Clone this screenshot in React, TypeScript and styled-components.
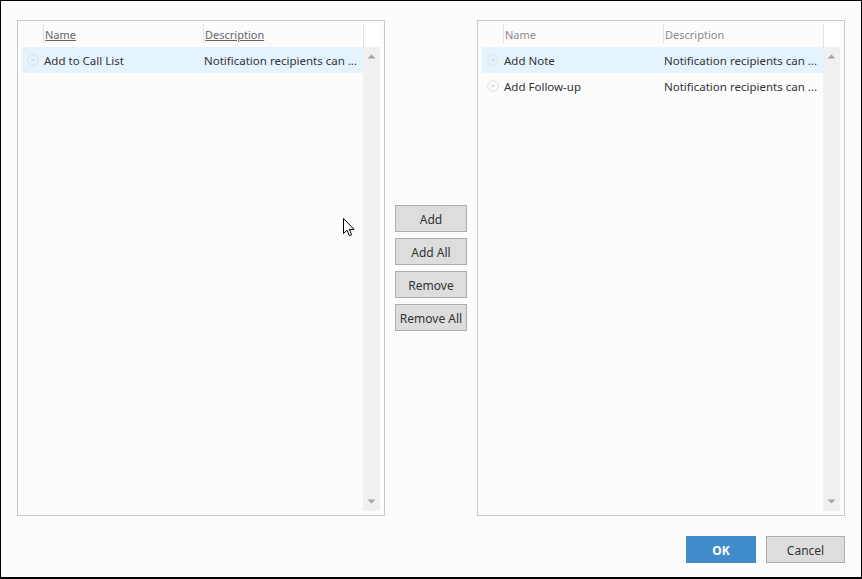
import styled, { createGlobalStyle } from 'styled-components';

const GlobalStyle = createGlobalStyle`
  body {
    margin: 0;
    background: #fff;
    font-family: 'Noto Sans', 'Open Sans', sans-serif;
  }
`;

const Dialog = styled.div`
  position: relative;
  box-sizing: border-box;
  width: 862px;
  height: 579px;
  border: 1px solid #000;
  border-bottom-width: 2px;
  background: #fcfcfc;
  padding: 19px 16px 0 16px;
  display: flex;
  flex-direction: column;
`;

const Lists = styled.div`
  display: flex;
  align-items: center;
`;

const Panel = styled.div`
  box-sizing: border-box;
  width: 368px;
  height: 496px;
  border: 1px solid #c9c9c9;
  background: #fcfcfc;
  padding: 3px 4px 4px 4px;
  display: flex;
  flex-direction: column;
`;

const Header = styled.div`
  display: grid;
  grid-template-columns: 21px 160px 160px 17px;
  height: 23px;
  flex: none;
`;

const HeaderCell = styled.div<{ $underlined?: boolean }>`
  display: flex;
  align-items: center;
  height: 18px;
  padding: 1px 0 0 1px;
  border-left: 1px solid #e2e2e2;
  font-size: 11px;
  color: ${p => (p.$underlined ? '#666' : '#8a8a8a')};
  text-decoration: ${p => (p.$underlined ? 'underline' : 'none')};
  white-space: nowrap;
  overflow: hidden;
`;

const HeaderBlank = styled.div``;

const ScrollHead = styled.div`
  height: 23px;
  border-left: 1px solid #e2e2e2;
  background: #fff;
`;

const Body = styled.div`
  flex: 1;
  display: flex;
  min-height: 0;
`;

const Rows = styled.div`
  flex: 1;
`;

const Row = styled.div<{ $selected?: boolean }>`
  display: grid;
  grid-template-columns: 21px 160px 160px;
  align-items: center;
  height: 26px;
  background: ${p => (p.$selected ? '#e5f3ff' : 'transparent')};
  font-size: 11.5px;
  color: #333;
`;

const Expander = styled.svg`
  display: block;
  margin-left: 5px;
`;

const Cell = styled.div`
  padding: 1px 0 0 1px;
  white-space: nowrap;
  overflow: hidden;
`;

const Scrollbar = styled.div`
  width: 17px;
  background: #f0f0f0;
  display: flex;
  flex-direction: column;
  justify-content: space-between;
  align-items: center;
  padding: 7px 0 7px;
  box-sizing: border-box;
`;

const Arrow = styled.svg`
  display: block;
`;

const Middle = styled.div`
  width: 92px;
  display: flex;
  flex-direction: column;
  align-items: center;
  gap: 6px;
`;

const MoveButton = styled.button`
  box-sizing: border-box;
  width: 72px;
  height: 27px;
  padding: 1px 0 0;
  border: 1px solid #adadad;
  background: #dddddd;
  color: #333;
  font-family: 'Noto Sans', 'Open Sans', sans-serif;
  font-size: 12px;
`;

const Footer = styled.div`
  display: flex;
  justify-content: flex-end;
  gap: 10px;
  margin-top: 20px;
`;

const FooterButton = styled.button<{ $primary?: boolean }>`
  box-sizing: border-box;
  width: ${p => (p.$primary ? '70px' : '79px')};
  height: 27px;
  padding: 1px 0 0;
  border: 1px solid ${p => (p.$primary ? '#428bca' : '#adadad')};
  background: ${p => (p.$primary ? '#428bca' : '#dddddd')};
  color: ${p => (p.$primary ? '#fff' : '#333')};
  font-family: 'Noto Sans', 'Open Sans', sans-serif;
  font-size: 12px;
  font-weight: ${p => (p.$primary ? 700 : 400)};
`;

const Cursor = styled.svg`
  position: absolute;
  left: 342px;
  top: 217px;
`;

type Item = { name: string; description: string };

const ExpandIcon = () => (
  <Expander width="12" height="12" viewBox="0 0 12 12">
    <circle cx="6" cy="6" r="5.3" fill="none" stroke="#e0e0e0" />
    <path d="M3.8 5 L8.2 5 L6 7.4 Z" fill="#d6d6d6" />
  </Expander>
);

const ItemList = ({ items, underlined }: { items: Item[]; underlined?: boolean }) => (
  <Panel>
    <Header>
      <HeaderBlank />
      <HeaderCell $underlined={underlined}>Name</HeaderCell>
      <HeaderCell $underlined={underlined}>Description</HeaderCell>
      <ScrollHead />
    </Header>
    <Body>
      <Rows>
        {items.map((item, i) => (
          <Row key={item.name} $selected={i === 0}>
            <ExpandIcon />
            <Cell>{item.name}</Cell>
            <Cell>{item.description}</Cell>
          </Row>
        ))}
      </Rows>
      <Scrollbar>
        <Arrow width="9" height="5" viewBox="0 0 9 5">
          <path d="M0.5 4.5 L4.5 0.5 L8.5 4.5 Z" fill="#a6a6a6" />
        </Arrow>
        <Arrow width="9" height="5" viewBox="0 0 9 5">
          <path d="M0.5 0.5 L4.5 4.5 L8.5 0.5 Z" fill="#a6a6a6" />
        </Arrow>
      </Scrollbar>
    </Body>
  </Panel>
);

const available: Item[] = [
  { name: 'Add to Call List', description: 'Notification recipients can ...' },
];

const selected: Item[] = [
  { name: 'Add Note', description: 'Notification recipients can ...' },
  { name: 'Add Follow-up', description: 'Notification recipients can ...' },
];

const App: React.FC = () => (
  <>
    <GlobalStyle />
    <Dialog>
      <Lists>
        <ItemList items={available} underlined />
        <Middle>
          <MoveButton>Add</MoveButton>
          <MoveButton>Add All</MoveButton>
          <MoveButton>Remove</MoveButton>
          <MoveButton>Remove All</MoveButton>
        </Middle>
        <ItemList items={selected} />
      </Lists>
      <Footer>
        <FooterButton $primary>OK</FooterButton>
        <FooterButton>Cancel</FooterButton>
      </Footer>
      <Cursor width="12" height="20" viewBox="0 0 12 20">
        <path
          d="M0.5 0.5 L0.5 15.5 L4 12.2 L6.4 17.8 L8.6 16.8 L6.3 11.4 L11 11.4 Z"
          fill="#fff"
          stroke="#000"
          strokeWidth="1"
          strokeLinejoin="miter"
        />
      </Cursor>
    </Dialog>
  </>
);

export default App;
